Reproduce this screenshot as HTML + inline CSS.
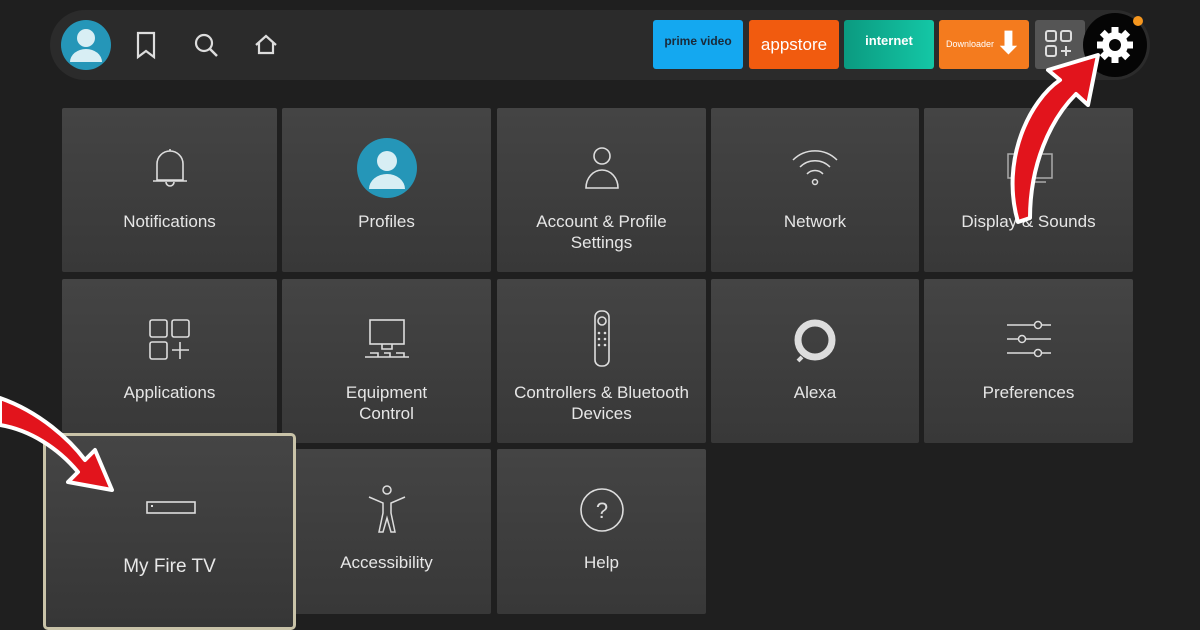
<!DOCTYPE html>
<html><head><meta charset="utf-8"><style>
body{margin:0;width:1200px;height:630px;background:#1f1f1f;overflow:hidden;position:relative;font-family:"Liberation Sans",sans-serif}
.bar{position:absolute;left:50px;top:10px;width:1100px;height:70px;border-radius:35px;background:#2b2b2b}
.t{position:absolute;background:linear-gradient(180deg,#444 0%,#383838 100%);color:#e6e6e6;font-size:17px;text-align:center;border-radius:2px}
.t .l{position:absolute;left:0;right:0;line-height:21px}
.t svg{position:absolute;left:50%;transform:translateX(-50%)}
.app{position:absolute;top:20px;height:49px;border-radius:3px;color:#fff;text-align:center}
</style></head><body>
<div class="bar"></div>
<svg style="position:absolute;left:0;top:0" width="1200" height="90">
<circle cx="86" cy="45" r="25" fill="#2596b8"/><circle cx="86" cy="38" r="9" fill="#d8eef4"/><path d="M70 62a16 13 0 0 1 32 0z" fill="#d8eef4"/>
<path d="M138 33h16v24l-8-6-8 6z" fill="none" stroke="#ddd" stroke-width="2.2"/>
<circle cx="204" cy="43" r="8" fill="none" stroke="#ddd" stroke-width="2.2"/><path d="M210 49l7 7" stroke="#ddd" stroke-width="2.5"/>
<path d="M256 45l10-9 10 9M259 43v10h14V43" fill="none" stroke="#ddd" stroke-width="2.2"/>
</svg>
<div class="app" style="left:653px;width:90px;background:#14a8f0;font-weight:bold;font-size:12px;line-height:42px;color:#1a2a3a">prime video</div>
<div class="app" style="left:749px;width:90px;background:#f15b0f;font-size:17px;line-height:49px">appstore</div>
<div class="app" style="left:844px;width:90px;background:linear-gradient(90deg,#0b9a80,#14c7a6);font-weight:bold;font-size:13px;line-height:42px">internet</div>
<div class="app" style="left:939px;width:90px;background:#f47b1e;font-size:9px;line-height:49px;text-align:left;padding-left:7px;box-sizing:border-box">Downloader<span style="position:absolute;right:8px;top:6px;font-size:30px;line-height:36px;font-weight:bold">⬇</span></div>
<div class="app" style="left:1035px;width:50px;background:#555"></div>
<svg style="position:absolute;left:1035px;top:20px" width="50" height="49"><g fill="none" stroke="#ddd" stroke-width="2"><rect x="11" y="11" width="10" height="10" rx="2"/><rect x="26" y="11" width="10" height="10" rx="2"/><rect x="11" y="26" width="10" height="10" rx="2"/><path d="M31 26v10M26 31h10"/></g></svg>
<svg style="position:absolute;left:1080px;top:10px" width="70" height="70"><circle cx="35" cy="35" r="32" fill="#050505"/><circle cx="58" cy="11" r="5" fill="#f5961e"/>
<g transform="translate(35 35)" fill="#fff"><circle r="13"/><g id="k"><rect x="-3.5" y="-18" width="7" height="8"/></g><use href="#k" transform="rotate(45)"/><use href="#k" transform="rotate(90)"/><use href="#k" transform="rotate(135)"/><use href="#k" transform="rotate(180)"/><use href="#k" transform="rotate(225)"/><use href="#k" transform="rotate(270)"/><use href="#k" transform="rotate(315)"/><circle r="6" fill="#050505"/></g></svg>

<div class="t" style="left:62px;top:108px;width:215px;height:164px"><svg style="top:36px" width="44" height="46"><path d="M9 36V20a13 13 0 0 1 26 0v16zM5 37h34M22 5v2M18 38a4 4 0 0 0 8 0" fill="none" stroke="#ddd" stroke-width="1.6"/></svg><div class="l" style="top:103px">Notifications</div></div>
<div class="t" style="left:282px;top:108px;width:209px;height:164px"><svg style="top:29px" width="62" height="62"><circle cx="31" cy="31" r="30" fill="#2596b8"/><circle cx="31" cy="24" r="10" fill="#d8eef4"/><path d="M13 52a18 15 0 0 1 36 0z" fill="#d8eef4"/></svg><div class="l" style="top:103px">Profiles</div></div>
<div class="t" style="left:497px;top:108px;width:209px;height:164px"><svg style="top:36px" width="44" height="48"><circle cx="22" cy="12" r="8" fill="none" stroke="#ddd" stroke-width="1.6"/><path d="M6 44a16 18 0 0 1 32 0z" fill="none" stroke="#ddd" stroke-width="1.6"/></svg><div class="l" style="top:103px">Account &amp; Profile<br>Settings</div></div>
<div class="t" style="left:711px;top:108px;width:208px;height:164px"><svg style="top:38px" width="50" height="42"><g fill="none" stroke="#ddd" stroke-width="1.5"><path d="M3 14a31 31 0 0 1 44 0M10 21a21 21 0 0 1 30 0M17 28a11 11 0 0 1 16 0"/><circle cx="25" cy="36" r="2.5"/></g></svg><div class="l" style="top:103px">Network</div></div>
<div class="t" style="left:924px;top:108px;width:209px;height:164px"><svg style="top:44px" width="50" height="32"><g fill="none" stroke="#aaa" stroke-width="1.5"><rect x="4" y="2" width="44" height="24"/><path d="M30 30h12"/></g></svg><div class="l" style="top:103px">Display &amp; Sounds</div></div>

<div class="t" style="left:62px;top:279px;width:215px;height:164px"><svg style="top:38px" width="46" height="46"><g fill="none" stroke="#ddd" stroke-width="1.6"><rect x="3" y="3" width="17" height="17" rx="2"/><rect x="25" y="3" width="17" height="17" rx="2"/><rect x="3" y="25" width="17" height="17" rx="2"/><path d="M33 25v17M25 33h17"/></g></svg><div class="l" style="top:103px">Applications</div></div>
<div class="t" style="left:282px;top:279px;width:209px;height:164px"><svg style="top:38px" width="50" height="46"><g fill="none" stroke="#ddd" stroke-width="1.6"><rect x="8" y="3" width="34" height="24"/><path d="M20 27v5h10v-5M3 40h44M8 36h8v4M22 36h6v4M34 36h8v4"/></g></svg><div class="l" style="top:103px">Equipment<br>Control</div></div>
<div class="t" style="left:497px;top:279px;width:209px;height:164px"><svg style="top:30px" width="20" height="60"><g fill="none" stroke="#ddd" stroke-width="1.6"><rect x="3" y="2" width="14" height="55" rx="6"/><circle cx="10" cy="12" r="4"/></g><g fill="#ddd"><circle cx="7" cy="24" r="1.3"/><circle cx="13" cy="24" r="1.3"/><circle cx="7" cy="30" r="1.3"/><circle cx="13" cy="30" r="1.3"/><circle cx="7" cy="36" r="1.3"/><circle cx="13" cy="36" r="1.3"/></g></svg><div class="l" style="top:103px">Controllers &amp; Bluetooth<br>Devices</div></div>
<div class="t" style="left:711px;top:279px;width:208px;height:164px"><svg style="top:38px" width="46" height="46"><path d="M23 3a20 20 0 1 0 0 40l0 0 0 0" fill="none"/><circle cx="23" cy="23" r="17" fill="none" stroke="#ddd" stroke-width="7"/><path d="M10 40l-4 4" stroke="#ddd" stroke-width="4"/></svg><div class="l" style="top:103px">Alexa</div></div>
<div class="t" style="left:924px;top:279px;width:209px;height:164px"><svg style="top:40px" width="50" height="40"><g fill="none" stroke="#ddd" stroke-width="1.5"><path d="M3 6h44M3 20h44M3 34h44"/><circle cx="34" cy="6" r="3.5" fill="#3e3e3e"/><circle cx="18" cy="20" r="3.5" fill="#3e3e3e"/><circle cx="34" cy="34" r="3.5" fill="#3e3e3e"/></g></svg><div class="l" style="top:103px">Preferences</div></div>

<div class="t" style="left:282px;top:449px;width:209px;height:165px"><svg style="top:35px" width="40" height="50"><g fill="none" stroke="#ddd" stroke-width="1.5"><circle cx="20" cy="6" r="4"/><path d="M2 13l14 6v10l-4 19h4l4-14 4 14h4l-4-19V19l14-6"/></g></svg><div class="l" style="top:103px">Accessibility</div></div>
<div class="t" style="left:497px;top:449px;width:209px;height:165px"><svg style="top:38px" width="46" height="46"><circle cx="23" cy="23" r="21" fill="none" stroke="#ddd" stroke-width="1.6"/><text x="23" y="31" text-anchor="middle" fill="#ddd" font-size="22" font-family="Liberation Sans">?</text></svg><div class="l" style="top:103px">Help</div></div>

<div style="position:absolute;left:43px;top:433px;width:247px;height:191px;border:3px solid #c9c3a8;border-radius:5px;background:linear-gradient(180deg,#454545,#363636);color:#e8e8e8;text-align:center;font-size:19px">
<svg style="position:absolute;left:99px;top:64px" width="52" height="16"><rect x="2" y="2" width="48" height="11" fill="none" stroke="#ddd" stroke-width="1.6"/><rect x="6" y="5" width="2" height="2" fill="#ddd"/></svg>
<div style="position:absolute;left:0;right:0;top:120px">My Fire TV</div></div>

<svg style="position:absolute;left:0;top:0" width="1200" height="630">
<path d="M1018 222C1000 160 1030 100 1060 80L1048 70 1098 55 1088 105 1076 94C1050 120 1030 165 1030 218Z" fill="#e2141c" stroke="#fff" stroke-width="4" stroke-linejoin="round"/>
<path d="M0 398C40 412 70 440 85 460L95 450 112 490 68 482 78 472C58 448 30 430 0 425Z" fill="#e2141c" stroke="#fff" stroke-width="4" stroke-linejoin="round"/>
</svg>
</body></html>
